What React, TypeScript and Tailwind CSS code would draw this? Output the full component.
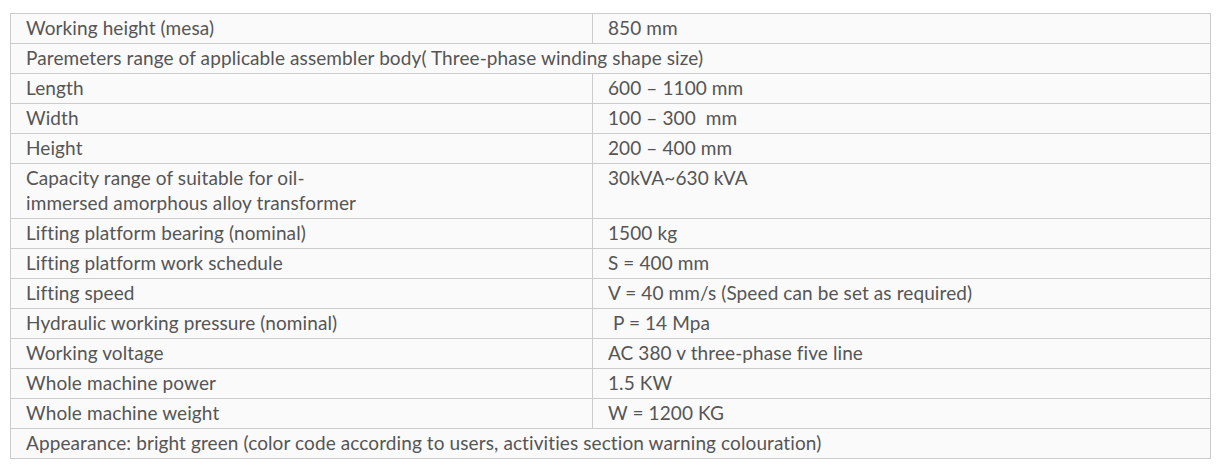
import React from "react";

type Row = { label: React.ReactNode; value?: React.ReactNode; span?: boolean };

const rows: Row[] = [
  { label: "Working height (mesa)", value: "850 mm" },
  { label: "Paremeters range of applicable assembler body( Three-phase winding shape size)", span: true },
  { label: "Length", value: "600 – 1100 mm" },
  { label: "Width", value: "100 – 300\u00a0 mm" },
  { label: "Height", value: "200 – 400 mm" },
  {
    label: (
      <>
        Capacity range of suitable for oil-
        <br />
        immersed amorphous alloy transformer
      </>
    ),
    value: "30kVA~630 kVA",
  },
  { label: "Lifting platform bearing (nominal)", value: "1500 kg" },
  { label: "Lifting platform work schedule", value: "S = 400 mm" },
  { label: "Lifting speed", value: "V = 40 mm/s (Speed can be set as required)" },
  { label: "Hydraulic working pressure (nominal)", value: "\u00a0P = 14 Mpa" },
  { label: "Working voltage", value: "AC 380 v three-phase five line" },
  { label: "Whole machine power", value: "1.5 KW" },
  { label: "Whole machine weight", value: "W = 1200 KG" },
  {
    label: "Appearance: bright green (color code according to users, activities section warning colouration)",
    span: true,
  },
];

export default function App() {
  return (
    <div className="min-h-[471px] w-[1224px] bg-white pl-[10px] pt-[13px] font-['Lato',sans-serif] text-[19px] leading-[25px] tracking-[0.1px] text-[#555555]">
      <table className="w-[1201px] table-fixed border-collapse bg-[#fafafa]">
        <colgroup>
          <col className="w-[582px]" />
          <col />
        </colgroup>
        <tbody>
          {rows.map((r, i) => (
            <tr key={i}>
              {r.span ? (
                <td colSpan={2} className="border border-[#cccccc] px-[15px] pt-[1px] pb-[3px] align-top">
                  {r.label}
                </td>
              ) : (
                <>
                  <td className="border border-[#cccccc] px-[15px] pt-[1px] pb-[3px] align-top">{r.label}</td>
                  <td className="border border-[#cccccc] px-[15px] pt-[1px] pb-[3px] align-top">{r.value}</td>
                </>
              )}
            </tr>
          ))}
        </tbody>
      </table>
    </div>
  );
}
